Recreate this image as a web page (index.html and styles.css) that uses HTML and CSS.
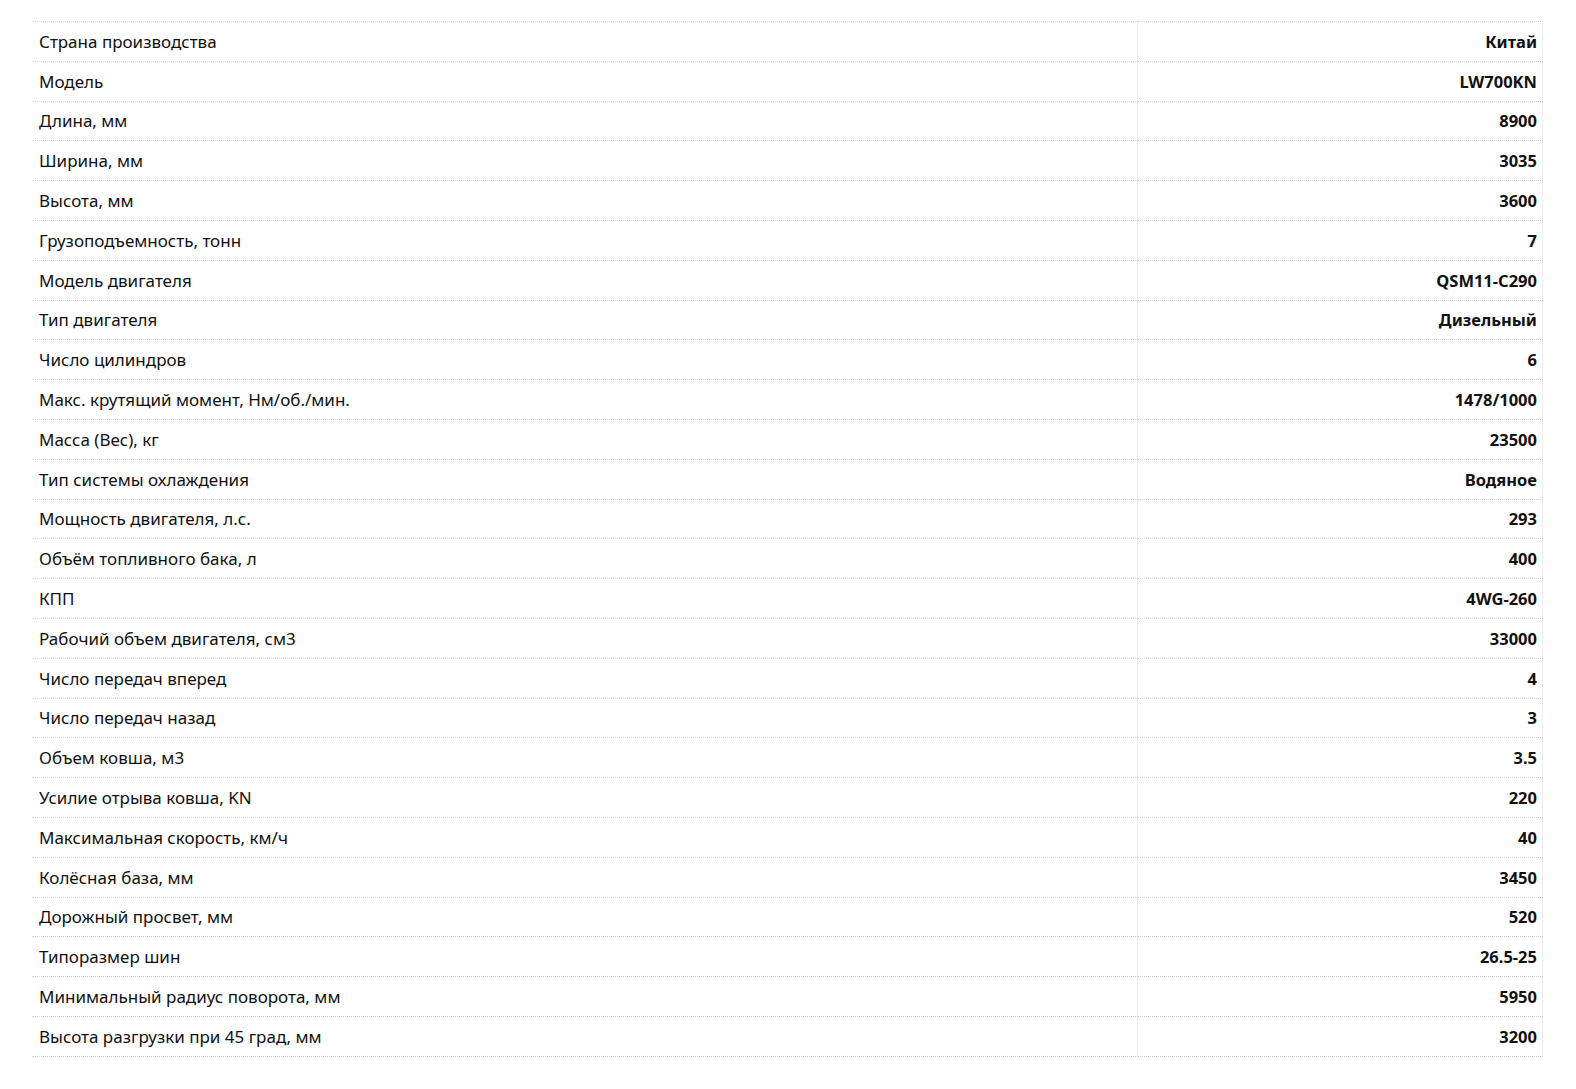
FILE: index.html
```html
<!DOCTYPE html>
<html lang="ru">
<head>
    <meta charset="UTF-8">
    <meta name="viewport" content="width=device-width, initial-scale=1.0">
    <title>Характеристики</title>
    <link rel="stylesheet" href="styles.css">
</head>
<body>
    <div class="specs">
        <table class="specs-table">
            <tr><td>Страна производства</td><td>Китай</td></tr>
            <tr><td>Модель</td><td>LW700KN</td></tr>
            <tr><td>Длина, мм</td><td>8900</td></tr>
            <tr><td>Ширина, мм</td><td>3035</td></tr>
            <tr><td>Высота, мм</td><td>3600</td></tr>
            <tr><td>Грузоподъемность, тонн</td><td>7</td></tr>
            <tr><td>Модель двигателя</td><td>QSM11-C290</td></tr>
            <tr><td>Тип двигателя</td><td>Дизельный</td></tr>
            <tr><td>Число цилиндров</td><td>6</td></tr>
            <tr><td>Макс. крутящий момент, Нм/об./мин.</td><td>1478/1000</td></tr>
            <tr><td>Масса (Вес), кг</td><td>23500</td></tr>
            <tr><td>Тип системы охлаждения</td><td>Водяное</td></tr>
            <tr><td>Мощность двигателя, л.с.</td><td>293</td></tr>
            <tr><td>Объём топливного бака, л</td><td>400</td></tr>
            <tr><td>КПП</td><td>4WG-260</td></tr>
            <tr><td>Рабочий объем двигателя, см3</td><td>33000</td></tr>
            <tr><td>Число передач вперед</td><td>4</td></tr>
            <tr><td>Число передач назад</td><td>3</td></tr>
            <tr><td>Объем ковша, м3</td><td>3.5</td></tr>
            <tr><td>Усилие отрыва ковша, KN</td><td>220</td></tr>
            <tr><td>Максимальная скорость, км/ч</td><td>40</td></tr>
            <tr><td>Колёсная база, мм</td><td>3450</td></tr>
            <tr><td>Дорожный просвет, мм</td><td>520</td></tr>
            <tr><td>Типоразмер шин</td><td>26.5-25</td></tr>
            <tr><td>Минимальный радиус поворота, мм</td><td>5950</td></tr>
            <tr><td>Высота разгрузки при 45 град, мм</td><td>3200</td></tr>
        </table>
    </div>
</body>
</html>
```

FILE: styles.css
```css
body {
    margin: 0;
    padding: 21px 33px 0 32px;
    font-family: 'Noto Sans', sans-serif;
    color: #111;
    background: #fff;
}

.specs-table {
    width: 100%;
    border-collapse: collapse;
    font-size: 17px;
}

.specs-table td {
    height: 39.8px;
    padding: 0 7px;
    border-top: 1px dotted #d4d4d4;
    border-bottom: 1px dotted #d4d4d4;
    box-sizing: border-box;
}

.specs-table td:last-child {
    width: 405px;
    padding-right: 5px;
    text-align: right;
    font-size: 16.5px;
    font-weight: 700;
    border-left: 1px dotted #e0e0e0;
    border-right: 1px dotted #e0e0e0;
}
```
